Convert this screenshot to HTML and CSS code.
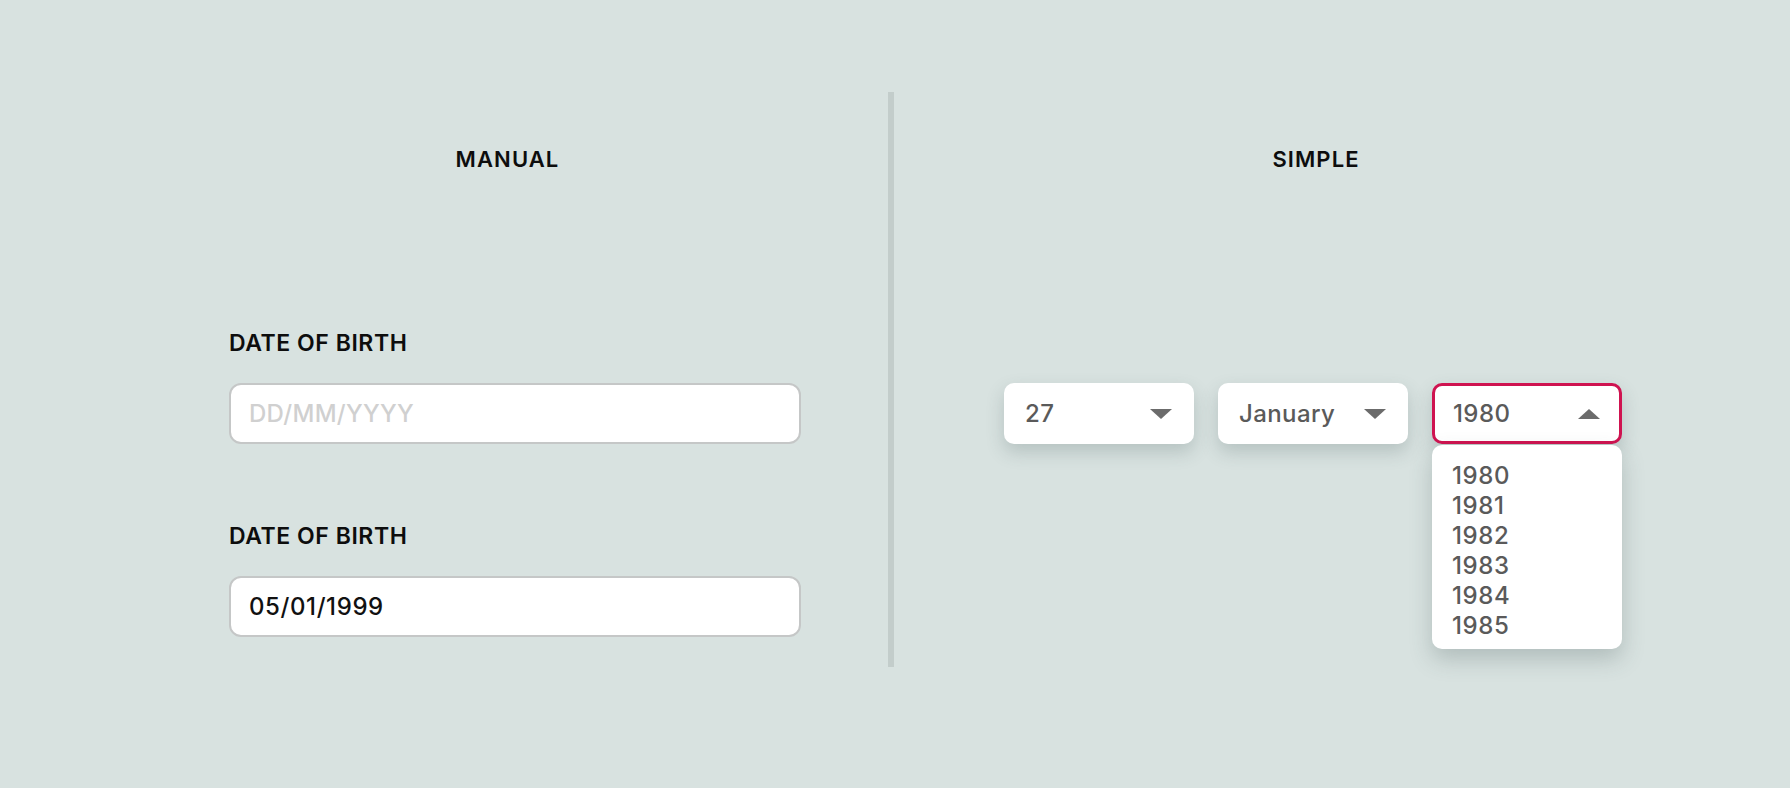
FILE: index.html
```html
<!DOCTYPE html>
<html lang="en">
<head>
<meta charset="utf-8">
<title>Date of birth</title>
<link rel="stylesheet" href="styles.css">
</head>
<body>
<main class="page">
  <section class="col col-manual">
    <h2 class="heading">MANUAL</h2>
    <div class="form">
      <label class="label" for="dob1">DATE OF BIRTH</label>
      <input class="text-input" id="dob1" type="text" placeholder="DD/MM/YYYY">
      <label class="label label-second" for="dob2">DATE OF BIRTH</label>
      <input class="text-input" id="dob2" type="text" value="05/01/1999">
    </div>
  </section>
  <section class="col col-simple">
    <h2 class="heading">SIMPLE</h2>
    <div class="selects">
      <div class="select">
        <span class="select-value">27</span>
        <span class="caret"></span>
      </div>
      <div class="select">
        <span class="select-value">January</span>
        <span class="caret"></span>
      </div>
      <div class="select-wrap">
        <div class="select select-open">
          <span class="select-value">1980</span>
          <span class="caret caret-up"></span>
        </div>
        <ul class="menu">
          <li>1980</li>
          <li>1981</li>
          <li>1982</li>
          <li>1983</li>
          <li>1984</li>
          <li>1985</li>
        </ul>
      </div>
    </div>
  </section>
</main>
</body>
</html>
```

FILE: styles.css
```css
* { box-sizing: border-box; }
html, body {
  margin: 0;
  padding: 0;
  background: #d8e2e0;
  font-family: Inter, "Noto Sans", sans-serif;
  color: #111;
}
.page {
  display: flex;
  padding-top: 92px;
  height: 788px;
}
.col {
  display: flex;
  flex-direction: column;
  height: 575px;
}
.col-manual {
  width: 894px;
  padding-left: 127px;
  border-right: 6px solid #c3cdcb;
}
.col-simple {
  width: 844px;
}
.heading {
  margin: 54px 0 0;
  font-size: 22px;
  line-height: 26px;
  font-weight: 600;
  text-align: center;
  letter-spacing: 1.1px;
  color: #0d0d0d;
}
.form {
  display: flex;
  flex-direction: column;
  margin-left: 102px;
  width: 572px;
  margin-top: 157px;
}
.label {
  font-size: 23px;
  line-height: 28px;
  font-weight: 600;
  letter-spacing: 0.55px;
  margin-bottom: 26px;
  color: #0d0d0d;
}
.label-second { margin-top: 78px; }
.text-input {
  height: 61px;
  width: 572px;
  border: 2px solid #c5c7c7;
  border-radius: 12px;
  background: #fff;
  padding: 0 18px;
  font-family: inherit;
  font-size: 24px;
  font-weight: 500;
  letter-spacing: 0.6px;
  color: #111;
  outline: none;
}
.text-input::placeholder { color: #d0d0d0; font-weight: 500; letter-spacing: 0.3px; }
.selects {
  display: flex;
  gap: 24px;
  margin-top: 211px;
  margin-left: 110px;
}
.select {
  width: 190px;
  height: 61px;
  background: #fff;
  border-radius: 10px;
  border: 3px solid transparent;
  padding: 0 19px 0 18px;
  display: flex;
  align-items: center;
  justify-content: space-between;
  box-shadow: 0 8px 18px rgba(60, 80, 80, 0.22);
  font-size: 24px;
  font-weight: 500;
  letter-spacing: 0.4px;
  color: #5a5a5a;
}
.select-open { border-color: #cf1350; }
.caret {
  width: 0;
  height: 0;
  border-left: 11px solid transparent;
  border-right: 11px solid transparent;
  border-top: 10px solid #6b6b6b;
}
.caret-up {
  border-top: 0;
  border-bottom: 10px solid #6b6b6b;
}
.select-wrap { position: relative; }
.menu {
  position: absolute;
  top: 62px;
  left: 0;
  width: 190px;
  margin: 0;
  padding: 16px 20px 8px;
  list-style: none;
  background: #fff;
  border-radius: 10px;
  box-shadow: 0 10px 22px rgba(60, 80, 80, 0.25);
  font-size: 24px;
  font-weight: 500;
  letter-spacing: 0.6px;
  line-height: 30px;
  color: #5a5a5a;
}
```
